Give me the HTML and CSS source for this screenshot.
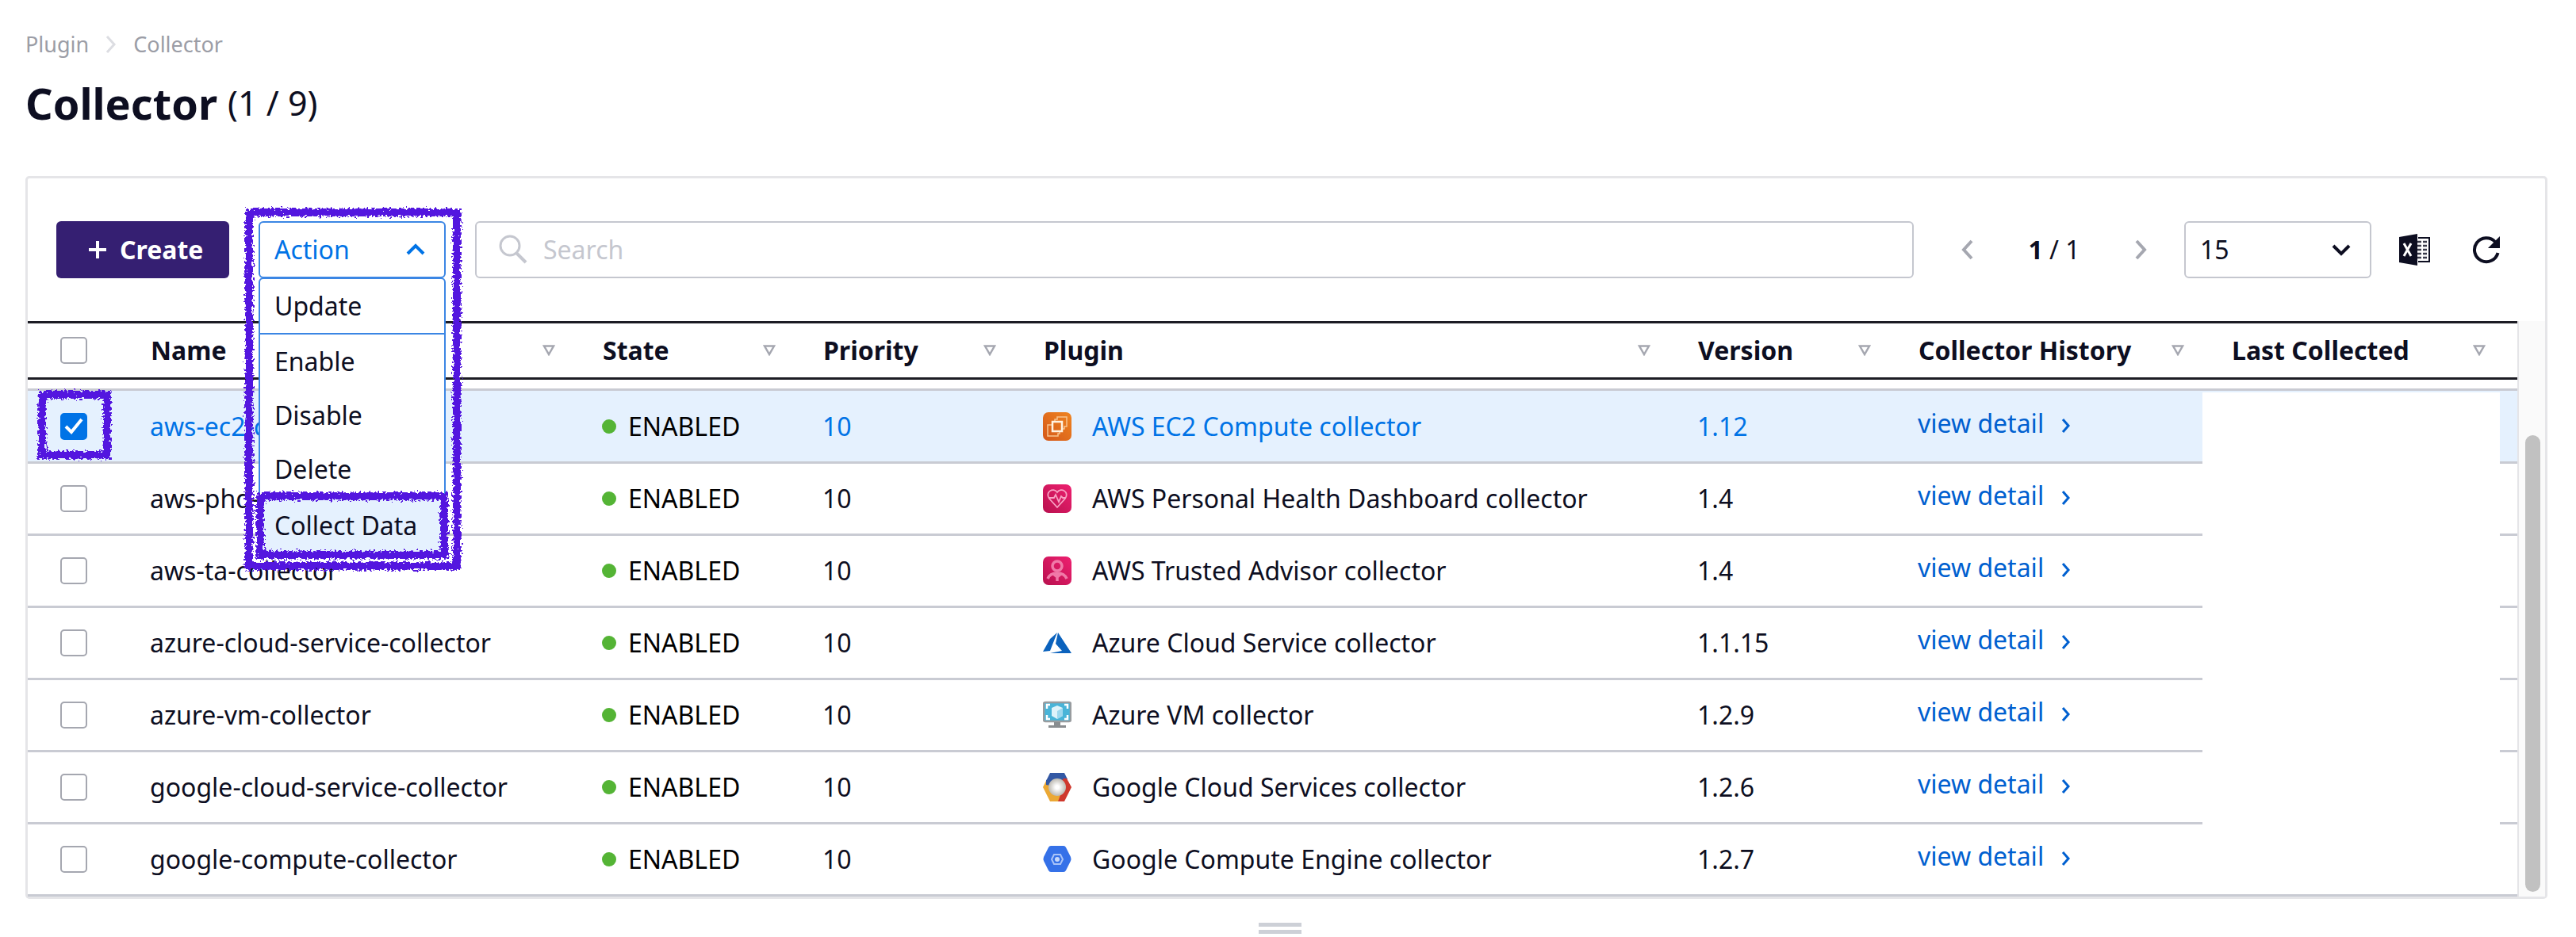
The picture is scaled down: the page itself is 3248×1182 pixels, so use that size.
FILE: index.html
```html
<!DOCTYPE html>
<html lang="en">
<head>
<meta charset="utf-8">
<title>Collector</title>
<link rel="stylesheet" href="styles.css">
</head>
<body>
<svg class="defs" width="0" height="0" aria-hidden="true">
  <defs>
    <symbol id="sort" viewBox="0 0 16 14"><path d="M2 1.500h12L8 12z" fill="#fff" stroke="#a5a7b0" stroke-width="2.500"/></symbol>
    <symbol id="more" viewBox="0 0 12 20"><path d="M2 2l7 8-7 8" fill="none" stroke="#0060d0" stroke-width="3"/></symbol>
    <linearGradient id="orange" x1="0" y1="1" x2="1" y2="0"><stop stop-color="#d4581a"/><stop offset="1" stop-color="#ef8420"/></linearGradient>
    <linearGradient id="pink" x1="0" y1="1" x2="1" y2="0"><stop stop-color="#b8104e"/><stop offset="1" stop-color="#ee2070"/></linearGradient>
    <radialGradient id="glow"><stop offset="0.200" stop-color="#fff"/><stop offset="1" stop-color="#bdbab2"/></radialGradient>
    <filter id="brush" x="-10%" y="-10%" width="120%" height="120%">
      <feTurbulence type="fractalNoise" baseFrequency="0.35" numOctaves="2" seed="4"/>
      <feDisplacementMap in="SourceGraphic" scale="10" xChannelSelector="R" yChannelSelector="G"/>
    </filter>
  </defs>
</svg>
<main class="page">
  <nav class="crumbs" aria-label="Breadcrumb">
    <a href="#">Plugin</a>
    <svg width="14" height="24" viewBox="0 0 14 24"><path d="M2 2l9 10-9 10" fill="none" stroke="#dcdde2" stroke-width="3"/></svg>
    <a href="#">Collector</a>
  </nav>
  <h1 class="title">Collector <span class="count">(1 / 9)</span></h1>

  <section class="card">
    <div class="toolbar">
      <button class="create" type="button">
        <svg width="24" height="24" viewBox="0 0 24 24"><path d="M12 1v22M1 12h22" stroke="#fff" stroke-width="4"/></svg>
        Create
      </button>
      <div class="action">
        <button class="action-button" type="button" aria-expanded="true">
          Action
          <svg width="24" height="16" viewBox="0 0 24 16"><path d="M2 13L12 3l10 10" fill="none" stroke="#0073e6" stroke-width="4"/></svg>
        </button>
        <div class="menu">
          <button type="button" class="first">Update</button>
          <button type="button">Enable</button>
          <button type="button">Disable</button>
          <button type="button">Delete</button>
          <button type="button" class="active">Collect Data<svg class="brush" aria-hidden="true"><rect width="100%" height="100%"/></svg></button>
        </div>
        <svg class="brush brush-menu" aria-hidden="true"><rect width="100%" height="100%"/></svg>
      </div>
      <label class="search">
        <svg width="38" height="38" viewBox="0 0 38 38"><circle cx="14" cy="14" r="12" fill="none" stroke="#c5c7cf" stroke-width="3"/><path d="M22 23l12 12" stroke="#c5c7cf" stroke-width="4"/></svg>
        <input type="text" placeholder="Search" aria-label="Search">
      </label>
      <div class="pager">
        <button type="button" aria-label="Previous page"><svg width="16" height="26" viewBox="0 0 16 26"><path d="M13 2L3 13l10 11" fill="none" stroke="#a5a7b0" stroke-width="4"/></svg></button>
        <span class="page-number"><b>1</b> / 1</span>
        <button type="button" aria-label="Next page"><svg width="16" height="26" viewBox="0 0 16 26"><path d="M3 2l10 11L3 24" fill="none" stroke="#a5a7b0" stroke-width="4"/></svg></button>
      </div>
      <div class="size">
        <select aria-label="Rows per page"><option>15</option></select>
        <svg width="24" height="16" viewBox="0 0 24 16"><path d="M2 3l10 10L22 3" fill="none" stroke="#0d0e21" stroke-width="4"/></svg>
      </div>
      <button class="tool" type="button" aria-label="Export to Excel">
        <svg width="40" height="40" viewBox="0 0 40 40"><path d="M0 4L23 0v40L0 36z" fill="#0d0e21"/><path d="M6 12l9 16M15 12L6 28" stroke="#fff" stroke-width="3"/><path d="M24 5h14v30H24" fill="none" stroke="#0d0e21" stroke-width="2"/><path d="M23 10h5m2 0h5M23 15h5m2 0h5M23 20h5m2 0h5M23 25h5m2 0h5M23 30h5m2 0h5" stroke="#3a3b4a" stroke-width="2.500"/></svg>
      </button>
      <button class="tool" type="button" aria-label="Refresh">
        <svg width="36" height="36" viewBox="0 0 36 36"><path d="M32.500 22A15 15 0 1 1 29 8" fill="none" stroke="#0d0e21" stroke-width="4"/><path d="M35 1v15H20z" fill="#0d0e21"/></svg>
      </button>
    </div>

    <div class="grid">
      <div class="table-area">
        <table>
          <colgroup><col class="c-check"><col class="c-name"><col class="c-state"><col class="c-state"><col class="c-plugin"><col class="c-state"><col class="c-history"><col class="c-last"></colgroup>
          <thead>
            <tr>
              <th><input type="checkbox" aria-label="Select all"></th>
              <th><div class="head">Name<svg width="16" height="14"><use href="#sort"/></svg></div></th>
              <th><div class="head">State<svg width="16" height="14"><use href="#sort"/></svg></div></th>
              <th><div class="head">Priority<svg width="16" height="14"><use href="#sort"/></svg></div></th>
              <th><div class="head">Plugin<svg width="16" height="14"><use href="#sort"/></svg></div></th>
              <th><div class="head">Version<svg width="16" height="14"><use href="#sort"/></svg></div></th>
              <th><div class="head">Collector History<svg width="16" height="14"><use href="#sort"/></svg></div></th>
              <th><div class="head">Last Collected<svg width="16" height="14"><use href="#sort"/></svg></div></th>
            </tr>
          </thead>
          <tbody>
            <tr class="spacer"><td colspan="8"></td></tr>
            <tr class="selected">
              <td><span class="marked"><input type="checkbox" checked aria-label="Select aws-ec2-collector"><svg class="tick" width="32" height="32" viewBox="0 0 32 32"><path d="M6 16l7 7L26 7" fill="none" stroke="#fff" stroke-width="4"/></svg><svg class="brush brush-check" aria-hidden="true"><rect width="100%" height="100%"/></svg></span></td>
              <td>aws-ec2-collector</td>
              <td><span class="state">ENABLED</span></td>
              <td>10</td>
              <td><span class="plugin"><svg width="36" height="36" viewBox="0 0 36 36"><rect width="36" height="36" rx="7" fill="url(#orange)"/><g fill="none" stroke="#f8c48e" stroke-width="1.500"><path d="M15 11V9h3V6h12v12h-3v3h-3M12 16H6v14h13v-3h2v-3"/><rect x="12" y="12" width="12" height="12" stroke="#fff3e2" stroke-width="2.500"/></g></svg>AWS EC2 Compute collector</span></td>
              <td>1.12</td>
              <td><a class="detail" href="#">view detail<svg width="12" height="20"><use href="#more"/></svg></a></td>
              <td></td>
            </tr>
            <tr>
              <td><input type="checkbox" aria-label="Select aws-phd-collector"></td>
              <td>aws-phd-collector</td>
              <td><span class="state">ENABLED</span></td>
              <td>10</td>
              <td><span class="plugin"><svg width="36" height="36" viewBox="0 0 36 36"><rect width="36" height="36" rx="7" fill="url(#pink)"/><path d="M18 29L8 18C2 10 13 3 18 10c5-7 16 0 10 8zM8 17h6l2-4 4 9 3-7 2 2h4" fill="none" stroke="#f8a3c4" stroke-width="1.800"/></svg>AWS Personal Health Dashboard collector</span></td>
              <td>1.4</td>
              <td><a class="detail" href="#">view detail<svg width="12" height="20"><use href="#more"/></svg></a></td>
              <td></td>
            </tr>
            <tr>
              <td><input type="checkbox" aria-label="Select aws-ta-collector"></td>
              <td>aws-ta-collector</td>
              <td><span class="state">ENABLED</span></td>
              <td>10</td>
              <td><span class="plugin"><svg width="36" height="36" viewBox="0 0 36 36"><rect width="36" height="36" rx="7" fill="url(#pink)"/><g fill="none" stroke="#f07aa8" stroke-width="3.500"><circle cx="18" cy="12" r="6"/><path d="M6 28c2-5 6-7 12-7s10 2 12 7M18 20v11M12 21l6 5 6-5"/></g></svg>AWS Trusted Advisor collector</span></td>
              <td>1.4</td>
              <td><a class="detail" href="#">view detail<svg width="12" height="20"><use href="#more"/></svg></a></td>
              <td></td>
            </tr>
            <tr>
              <td><input type="checkbox" aria-label="Select azure-cloud-service-collector"></td>
              <td>azure-cloud-service-collector</td>
              <td><span class="state">ENABLED</span></td>
              <td>10</td>
              <td><span class="plugin"><svg width="36" height="36" viewBox="0 0 36 36"><path d="M0 29L9 13 18 5 9 28zM19 5l17 26H9l15-3-8-9z" fill="#0b62bd"/></svg>Azure Cloud Service collector</span></td>
              <td>1.1.15</td>
              <td><a class="detail" href="#">view detail<svg width="12" height="20"><use href="#more"/></svg></a></td>
              <td></td>
            </tr>
            <tr>
              <td><input type="checkbox" aria-label="Select azure-vm-collector"></td>
              <td>azure-vm-collector</td>
              <td><span class="state">ENABLED</span></td>
              <td>10</td>
              <td><span class="plugin"><svg width="36" height="36" viewBox="0 0 36 36"><rect x="1" y="2" width="34" height="24" rx="2" fill="#48b4d8" stroke="#989c9f" stroke-width="2.500"/><path d="M14 27h8v4h7v3H7v-3h7z" fill="#898d90"/><path d="M18 6l7 3v10l-7 4-7-4V9z" fill="#dff3fa"/><path d="M18 13l7-4v10l-7 4z" fill="#9ed8ee"/><path d="M5 10V5h4M27 5h4v5M31 18v5h-4M9 23H5v-5" fill="none" stroke="#fff" stroke-width="2.500"/></svg>Azure VM collector</span></td>
              <td>1.2.9</td>
              <td><a class="detail" href="#">view detail<svg width="12" height="20"><use href="#more"/></svg></a></td>
              <td></td>
            </tr>
            <tr>
              <td><input type="checkbox" aria-label="Select google-cloud-service-collector"></td>
              <td>google-cloud-service-collector</td>
              <td><span class="state">ENABLED</span></td>
              <td>10</td>
              <td><span class="plugin"><svg width="36" height="36" viewBox="0 0 36 36"><path d="M4 10L9 0h18l4 8-13 10-12-1z" fill="#3358a4"/><path d="M26 7h4l6 11-9 18h-9l-1-18z" fill="#cf382d"/><path d="M4 10L0 18l9 18h10l3-8-6-12-8 0z" fill="#eba834"/><path d="M4 9l5-2v9l-5-1z" fill="#3358a4"/><circle cx="18" cy="18" r="11" fill="url(#glow)"/></svg>Google Cloud Services collector</span></td>
              <td>1.2.6</td>
              <td><a class="detail" href="#">view detail<svg width="12" height="20"><use href="#more"/></svg></a></td>
              <td></td>
            </tr>
            <tr>
              <td><input type="checkbox" aria-label="Select google-compute-collector"></td>
              <td>google-compute-collector</td>
              <td><span class="state">ENABLED</span></td>
              <td>10</td>
              <td><span class="plugin"><svg width="36" height="36" viewBox="0 0 36 36"><path d="M10 1h16q2 0 3 2l6 12q1 3 0 5l-6 12q-1 2-3 2H10q-2 0-3-2L1 20q-1-2 0-5L7 3q1-2 3-2z" fill="#3571e8"/><path d="M14 12h8l3 6-3 6h-8l-3-6z" fill="none" stroke="#a9c4f8" stroke-width="2"/><circle cx="18" cy="18" r="3" fill="#c5d7fa"/></svg>Google Compute Engine collector</span></td>
              <td>1.2.7</td>
              <td><a class="detail" href="#">view detail<svg width="12" height="20"><use href="#more"/></svg></a></td>
              <td></td>
            </tr>
          </tbody>
        </table>
        <div class="cover"></div>
      </div>
      <div class="track"><div class="thumb"></div></div>
    </div>
  </section>
  <div class="resize"><div class="handle"></div></div>
</main>
</body>
</html>
```
FILE: styles.css
```css
* { box-sizing: border-box; }
body { margin: 0; background: #fff; color: #0d0e21; font: 32px/44px "Noto Sans", sans-serif; }
button, input, select { font: inherit; color: inherit; margin: 0; }
button { background: none; border: 0; padding: 0; }
a { color: inherit; text-decoration: none; }
svg { display: block; flex: none; }
.defs { position: absolute; }
.page { padding: 36px 36px 0 32px; }

.crumbs { display: flex; align-items: center; gap: 21px; font-size: 27px; line-height: 40px; color: #9b9da6; }
.title { display: flex; align-items: center; gap: 13px; margin: 16px 0 54px; font-size: 54px; line-height: 76px; font-weight: 700; }
.count { font-size: 43px; font-weight: 400; }

.card { border: 3px solid #e5e5e8; border-radius: 5px; }
.toolbar { display: flex; align-items: center; padding: 54px 56px 54px 36px; }
.create { display: flex; align-items: center; gap: 16px; width: 218px; height: 72px; padding: 0 32px 0 40px; background: #351f72; color: #fff; border-radius: 6px; font-weight: 700; }

.action { position: relative; width: 236px; margin: 0 37px 0 37px; }
.action-button { display: flex; align-items: center; justify-content: space-between; width: 100%; height: 72px; padding: 0 24px 0 18px; border: 2px solid #3b86e4; border-radius: 6px; background: #fff; color: #0073e6; }
.menu { position: absolute; z-index: 2; top: 71px; left: 0; width: 100%; border: 2px solid #3b86e4; border-radius: 6px; background: #fff; }
.menu button { position: relative; display: block; width: 100%; height: 68px; padding: 0 18px; text-align: left; }
.menu .first { height: 70px; border-bottom: 2px solid #3b86e4; }
.menu .active { height: 74px; background: #e5f1fe; }

.brush { position: absolute; overflow: visible; z-index: 3; pointer-events: none; inset: 0; width: 100%; height: 100%; fill: none; stroke: #5315df; stroke-width: 10px; filter: url(#brush); }
.brush-menu { inset: -11px -12px auto; width: 262px; height: 446px; }
.brush-check { inset: -23px; width: 82px; height: 76px; }

.search { display: flex; align-items: center; flex: 1; gap: 18px; height: 72px; padding: 0 28px; border: 2px solid #c5c7cf; border-radius: 6px; }
.search input { flex: 1; border: 0; outline: 0; padding: 0; background: none; }
.search input::placeholder { color: #c5c7cf; opacity: 1; }
.pager { display: flex; align-items: center; margin: 0 47px 0 60px; }
.page-number { width: 202px; text-align: center; }
.size { position: relative; width: 236px; margin-right: 35px; }
.size select { appearance: none; width: 100%; height: 72px; padding: 0 18px; border: 2px solid #c5c7cf; border-radius: 6px; background: #fff; }
.size svg { position: absolute; right: 26px; top: 28px; }
.tool + .tool { margin-left: 52px; }

.grid { display: flex; }
.table-area { position: relative; flex: 1; }
table { width: 100%; table-layout: fixed; border-collapse: separate; border-spacing: 0; }
.c-check { width: 125px; }
.c-name { width: 570px; }
.c-state { width: 278px; }
.c-history { width: 395px; }
.c-last { width: 390px; }
th { height: 74px; padding: 0 30px; border-top: 3px solid #1c1c24; border-bottom: 3px solid #1c1c24; text-align: left; font-weight: 700; }
th:last-child { padding-right: 40px; }
.head { display: flex; align-items: center; justify-content: space-between; white-space: nowrap; }
td { height: 91px; padding: 0 29px; border-bottom: 3px solid #c9cbd3; white-space: nowrap; }
th:first-child, td:first-child { padding-left: 41px; }
.spacer td { height: 14px; }
.selected td { height: 92px; }
.selected { background: #e5f1fe; color: #0073e6; }
input[type="checkbox"] { appearance: none; display: block; width: 34px; height: 34px; border: 2px solid #a5a7b0; border-radius: 5px; background: #fff; }
input[type="checkbox"]:checked { border-color: #0073e6; background: #0073e6; }
.marked { position: relative; display: block; width: 34px; }
.tick { position: absolute; top: 1px; left: 1px; pointer-events: none; }
.state { display: flex; align-items: center; gap: 15px; color: #000; }
.state::before { content: ""; width: 18px; height: 18px; border-radius: 50%; background: #54b435; }
.plugin { display: flex; align-items: center; gap: 26px; }
.detail { display: flex; align-items: center; gap: 22px; padding-bottom: 8px; color: #0060d0; }
.detail svg { margin-top: 6px; }
.cover { position: absolute; top: 90px; bottom: 3px; right: 22px; width: 375px; background: #fff; }
.track { width: 35px; padding: 144px 6px 6px 8px; background: #fafafa; border-left: 2px solid #e5e5e8; }
.thumb { height: 100%; border-radius: 10px; background: #c1c1c1; }
.resize { padding: 30px 16px 0 0; }
.handle { width: 54px; height: 14px; margin: 0 auto; border: solid #cdd0d7; border-width: 5px 0; }
```
